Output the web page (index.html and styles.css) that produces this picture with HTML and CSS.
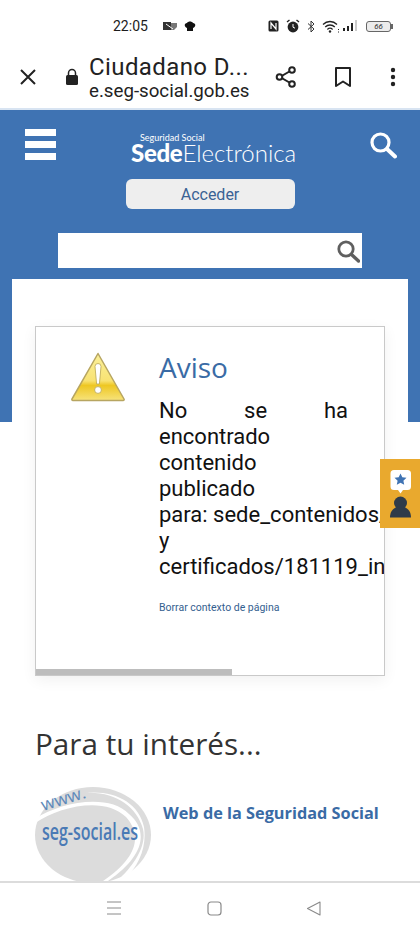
FILE: index.html
```html
<!DOCTYPE html>
<html>
<head>
    <meta charset="utf-8">
    <link rel="stylesheet" href="styles.css">
</head>
<body>
    <div class="phone">
        <div class="statusbar">
            <span class="time">22:05</span>
            <svg class="st-icon" width="14" height="10" viewBox="0 0 14 10"><rect x="0" y="1" width="8" height="8" fill="#333"/><path d="M8 2h6v4l-3 3H8z" fill="#777"/><path d="M3 3l7 5" stroke="#fff" stroke-width="1"/></svg>
            <svg class="st-icon" width="12" height="10" viewBox="0 0 12 10"><path d="M3 7C0 6 0 2 3 2c1-2 5-2 6 0 3 0 3 4 0 5v3H3z" fill="#111"/></svg>
            <span class="st-spacer"></span>
            <svg class="st-icon" width="11" height="12" viewBox="0 0 11 12"><rect x="0.5" y="0.5" width="10" height="11" rx="1.5" fill="#222"/><path d="M3 9V3l5 6V3" stroke="#fff" stroke-width="1.2" fill="none"/></svg>
            <svg class="st-icon" width="14" height="14" viewBox="0 0 14 14"><circle cx="7" cy="8" r="5.4" fill="#222"/><path d="M1 3l2.500-2M13 3l-2.500-2" stroke="#222" stroke-width="1.400"/><path d="M7 5v3.200l2 1" stroke="#fff" stroke-width="1" fill="none"/></svg>
            <svg class="st-icon" width="8" height="13" viewBox="0 0 8 13"><path d="M1 3.500l6 5.500-3 3V1l3 3-6 5.500" stroke="#333" stroke-width="1" fill="none"/></svg>
            <svg class="st-icon" width="18" height="13" viewBox="0 0 18 13"><path d="M1 4.500c4-4 10-4 14 0M3.200 7c2.800-2.700 6.800-2.700 9.600 0M5.400 9.400c1.500-1.400 3.700-1.400 5.200 0" stroke="#222" stroke-width="1.300" fill="none"/><circle cx="8" cy="11.500" r="1.200" fill="#222"/><path d="M16.500 9v1M16.500 11.500v1" stroke="#222" stroke-width="1"/></svg>
            <svg class="st-icon st-signal" width="16" height="12" viewBox="0 0 16 12"><rect x="1" y="8" width="2" height="3" fill="#222"/><rect x="5" y="6" width="2" height="5" fill="#222"/><rect x="9" y="3" width="2" height="8" fill="#222"/><rect x="13" y="0" width="2" height="11" fill="#ccc"/></svg>
            <span class="battery">66</span>
        </div>

        <div class="toolbar">
            <svg class="tb-close" width="18" height="18" viewBox="0 0 18 18"><path d="M2 2l14 14M16 2L2 16" stroke="#222" stroke-width="2"/></svg>
            <svg class="tb-lock" width="14" height="18" viewBox="0 0 14 18"><path d="M3.500 8V5a3.500 3.500 0 0 1 7 0v3" stroke="#222" stroke-width="1.500" fill="none"/><rect x="1" y="7" width="12" height="10" rx="1.500" fill="#222"/></svg>
            <div class="tb-title">
                <div class="tb-name">Ciudadano D...</div>
                <div class="tb-url">e.seg-social.gob.es</div>
            </div>
            <svg class="tb-share" width="24" height="24" viewBox="0 0 24 24"><path d="M18 5L6 12l12 7" stroke="#222" stroke-width="2" fill="none"/><circle cx="18" cy="5" r="2.800" fill="#fff" stroke="#222" stroke-width="2"/><circle cx="5.500" cy="12" r="2.800" fill="#fff" stroke="#222" stroke-width="2"/><circle cx="18" cy="19" r="2.800" fill="#fff" stroke="#222" stroke-width="2"/></svg>
            <svg class="tb-mark" width="16" height="20" viewBox="0 0 16 20"><path d="M1 1h14v18l-7-4.500L1 19z" stroke="#222" stroke-width="2" fill="none" stroke-linejoin="round"/></svg>
            <svg class="tb-more" width="6" height="20" viewBox="0 0 6 20"><circle cx="3" cy="3" r="2.200" fill="#222"/><circle cx="3" cy="10" r="2.200" fill="#222"/><circle cx="3" cy="17" r="2.200" fill="#222"/></svg>
        </div>

        <div class="site">
            <div class="header">
                <div class="burger"><span></span><span></span><span></span></div>
                <div class="brand">
                    <div class="brand-top">Seguridad Social</div>
                    <div class="brand-main"><b>Sede</b>Electrónica</div>
                </div>
                <svg class="header-search" width="28" height="28" viewBox="0 0 28 28"><circle cx="11.500" cy="11.500" r="8.500" stroke="#fff" stroke-width="3.200" fill="none"/><path d="M18 18l8 7.500" stroke="#fff" stroke-width="4" stroke-linecap="round"/></svg>
            </div>
            <div class="login-row"><button class="login">Acceder</button></div>
            <div class="search-row">
                <div class="searchbox">
                    <svg width="24" height="24" viewBox="0 0 24 24"><circle cx="10" cy="10" r="7.200" stroke="#5f5f5f" stroke-width="2.800" fill="none"/><path d="M15.500 15.500l7 6.500" stroke="#5f5f5f" stroke-width="3.400" stroke-linecap="round"/></svg>
                </div>
            </div>

            <div class="panel">
                <div class="card">
                    <div class="card-body">
                        <svg class="warn" width="54" height="50" viewBox="0 0 54 50">
                            <defs><linearGradient id="warnFill" x1="0" y1="0" x2="0" y2="1"><stop offset="0" stop-color="#fbf09a"/><stop offset="0.58" stop-color="#f8e273"/><stop offset="0.68" stop-color="#eec723"/><stop offset="1" stop-color="#f7e37c"/></linearGradient></defs>
                            <path d="M27 1.500L53 47a1 1 0 0 1-1 1.500H2a1 1 0 0 1-1-1.500z" fill="url(#warnFill)" stroke="#b7a561" stroke-width="1.500" stroke-linejoin="round"/>
                            <path d="M24 14.500a3 3 0 0 1 6 0L28.400 32h-2.800z" fill="#fff" stroke="#b9a650" stroke-width="0.800"/>
                            <circle cx="27" cy="38" r="3.400" fill="#fff" stroke="#b9a650" stroke-width="0.800"/>
                        </svg>
                        <div class="notice">
                            <h2>Aviso</h2>
                            <p class="justify">No se ha</p>
                            <p>encontrado</p>
                            <p>contenido</p>
                            <p>publicado</p>
                            <p class="nowrap">para: sede_contenidos/</p>
                            <p>y</p>
                            <p class="nowrap">certificados/181119_in</p>
                            <a class="clear-link">Borrar contexto de página</a>
                        </div>
                    </div>
                    <div class="scrollbar"><div class="thumb"></div></div>
                </div>

                <h3 class="interest">Para tu interés...</h3>
                <div class="link-item">
                    <svg class="seg-logo" width="118" height="96" viewBox="0 0 118 96">
                        <ellipse cx="58" cy="48" rx="58" ry="48" fill="#dcdcdc"/>
                        <path d="M0 36C25 19 70 9 91 30c17 19 11 42-26 66h5C110 70 114 44 94 27 74 6 25 15 0 32z" fill="#fff"/>
                        <path d="M50 6c30-2 52 14 58 36 4 18-10 38-28 54h6c18-16 26-36 23-56C104 16 80 3 50 6z" fill="#fff"/>
                        <text class="logo-www" x="8" y="24" transform="rotate(-17 8 24)" textLength="46" lengthAdjust="spacingAndGlyphs">www.</text>
                        <text class="logo-text" x="7" y="53" textLength="96" lengthAdjust="spacingAndGlyphs">seg-social.es</text>
                    </svg>
                    <a class="link-title">Web de la Seguridad Social</a>
                </div>
            </div>
            <div class="side-tab">
                <svg width="22" height="48" viewBox="0 0 22 48">
                    <path d="M4 0h13.500a3.500 3.500 0 0 1 3.500 3.500v13a3.500 3.500 0 0 1-3.500 3.500H13l-2.500 3.500L8 20H4a3.500 3.500 0 0 1-3.500-3.500v-13A3.500 3.500 0 0 1 4 0z" fill="#fff"/>
                    <path d="M10.500 3.500l1.800 3.800 4.200.5-3.100 2.900.8 4.100-3.700-2-3.700 2 .8-4.100-3.100-2.900 4.200-.5z" fill="#3f73b3"/>
                    <circle cx="10.500" cy="33" r="6.500" fill="#2f3b49"/>
                    <path d="M0 47.500c0-6 3-9 7-10.500h7c4 1.500 7 4.500 7 10.500z" fill="#2f3b49"/>
                </svg>
            </div>
        </div>

        <div class="navbar">
            <svg width="16" height="16" viewBox="0 0 16 16"><path d="M1 2h14M1 8h14M1 14h14" stroke="#8a8a8a" stroke-width="1"/></svg>
            <svg width="15" height="15" viewBox="0 0 15 15"><rect x="1" y="1" width="13" height="13" rx="3" stroke="#8a8a8a" stroke-width="1.200" fill="none"/></svg>
            <svg width="15" height="15" viewBox="0 0 15 15"><path d="M14 1L1.500 7.500 14 14z" stroke="#8a8a8a" stroke-width="1.100" fill="none" stroke-linejoin="round"/></svg>
        </div>
    </div>
</body>
</html>
```

FILE: styles.css
```css
* {
    box-sizing: border-box;
}

body {
    margin: 0;
    background: #fff;
    font-family: Roboto, sans-serif;
}

.phone {
    width: 420px;
    height: 933px;
    display: flex;
    flex-direction: column;
    overflow: hidden;
}

/* status bar */
.statusbar {
    height: 52px;
    padding: 0 28px 0 113px;
    display: flex;
    align-items: center;
    gap: 7px;
    flex-shrink: 0;
}

.time {
    font-size: 14px;
    color: #1c1c1c;
    margin-right: 8px;
}

.st-spacer {
    flex: 1;
}

.st-signal {
    margin-left: -5px;
}

.battery {
    position: relative;
    width: 25px;
    height: 11px;
    border: 1px solid #666;
    border-radius: 3px;
    font-size: 8px;
    font-style: italic;
    line-height: 9px;
    text-align: center;
    color: #333;
    background: #ececec;
    margin: 0 1px 0 1px;
}

.battery::after {
    content: "";
    position: absolute;
    right: -3px;
    top: 2px;
    width: 2px;
    height: 5px;
    background: #666;
}

/* browser toolbar */
.toolbar {
    height: 58px;
    display: flex;
    align-items: center;
    border-bottom: 2px solid #d8e4f2;
    flex-shrink: 0;
    padding-bottom: 6px;
}

.tb-close {
    margin-left: 19px;
}

.tb-lock {
    margin-left: 28px;
}

.tb-title {
    margin-left: 10px;
    width: 176px;
    color: #222;
}

.tb-name {
    font-size: 24px;
    line-height: 28px;
    letter-spacing: 0.4px;
}

.tb-url {
    font-size: 18.700px;
    line-height: 20px;
}

.tb-share {
    margin-left: 9px;
}

.tb-mark {
    margin-left: 37px;
}

.tb-more {
    margin-left: 39px;
}

/* site */
.site {
    position: relative;
    flex: 1;
    min-height: 0;
    overflow: hidden;
    background: linear-gradient(#3f73b3 312px, #fff 312px);
}

.header {
    height: 69px;
    padding: 19px 23px 0 25px;
    display: flex;
    align-items: flex-start;
}

.burger {
    width: 31px;
    display: flex;
    flex-direction: column;
    gap: 5px;
}

.burger span {
    height: 7px;
    background: #fff;
}

.brand {
    margin-left: 75px;
    color: #fff;
    margin-top: 4px;
    font-family: Lato, sans-serif;
}

.brand-top {
    font-size: 9px;
    line-height: 10px;
    margin-left: 9px;
}

.brand-main {
    font-size: 24px;
    line-height: 19px;
    font-weight: 300;
    white-space: nowrap;
}

.brand-main b {
    font-weight: 900;
    letter-spacing: -0.3px;
}

.header-search {
    margin-left: auto;
    margin-top: 2px;
}

.login-row {
    display: flex;
    justify-content: center;
}

.login {
    width: 169px;
    height: 30px;
    border: none;
    border-radius: 6px;
    background: #eeeeee;
    color: #3a6294;
    font-family: Roboto, sans-serif;
    font-size: 16px;
}

.search-row {
    padding: 24px 58px 0;
}

.searchbox {
    height: 35px;
    background: #fff;
    display: flex;
    align-items: center;
    justify-content: flex-end;
    padding-right: 2px;
}

.panel {
    margin: 11px 12px 0;
    background: #fff;
    padding: 47px 23px 0;
}

.card {
    width: 350px;
    height: 350px;
    border: 1px solid #c9c9c9;
    box-shadow: 0 4px 14px rgba(0, 0, 0, 0.06);
    display: flex;
    flex-direction: column;
    overflow: hidden;
}

.card-body {
    flex: 1;
    display: flex;
    padding: 25px 0 0 35px;
    overflow: hidden;
}

.warn {
    flex-shrink: 0;
}

.notice {
    margin: -3px 0 0 34px;
    width: 189px;
    flex-shrink: 0;
    font-size: 22px;
    line-height: 26px;
    color: #111;
}

.notice h2 {
    margin: 0 0 13px;
    font-family: "Open Sans", sans-serif;
    font-size: 28px;
    line-height: 36px;
    font-weight: 400;
    color: #3a6ba5;
}

.notice p {
    margin: 0;
}

.justify {
    text-align: justify;
    text-align-last: justify;
}

.nowrap {
    white-space: nowrap;
}

.clear-link {
    display: block;
    margin-top: 21px;
    font-size: 10.500px;
    line-height: 14px;
    color: #34608f;
    white-space: nowrap;
}

.scrollbar {
    height: 6px;
    flex-shrink: 0;
}

.thumb {
    width: 196px;
    height: 100%;
    background: #bdbdbd;
}

.interest {
    margin: 48px 0 0;
    font-family: "Open Sans", sans-serif;
    font-size: 29.700px;
    line-height: 40px;
    font-weight: 400;
    color: #333;
}

.link-item {
    margin-top: 23px;
    display: flex;
    align-items: flex-start;
}

.seg-logo {
    flex-shrink: 0;
}

.logo-www {
    font-family: "Open Sans", sans-serif;
    font-size: 17px;
    fill: #5f8aba;
}

.logo-text {
    font-family: "Open Sans", sans-serif;
    font-size: 24px;
    font-weight: 600;
    fill: #4a7ab5;
}

.link-title {
    margin: 15px 0 0 10px;
    font-family: "Open Sans", sans-serif;
    font-size: 16.300px;
    line-height: 22px;
    font-weight: 700;
    color: #3a6ba5;
    white-space: nowrap;
}

.side-tab {
    position: absolute;
    right: 0;
    top: 349px;
    width: 40px;
    height: 69px;
    background: #e9a92e;
    padding: 11px 0 0 10px;
}

/* android nav */
.navbar {
    height: 52px;
    border-top: 2px solid #dcdcdc;
    background: #fff;
    flex-shrink: 0;
    display: flex;
    align-items: center;
    padding: 0 99px 0 106px;
    justify-content: space-between;
}
```
